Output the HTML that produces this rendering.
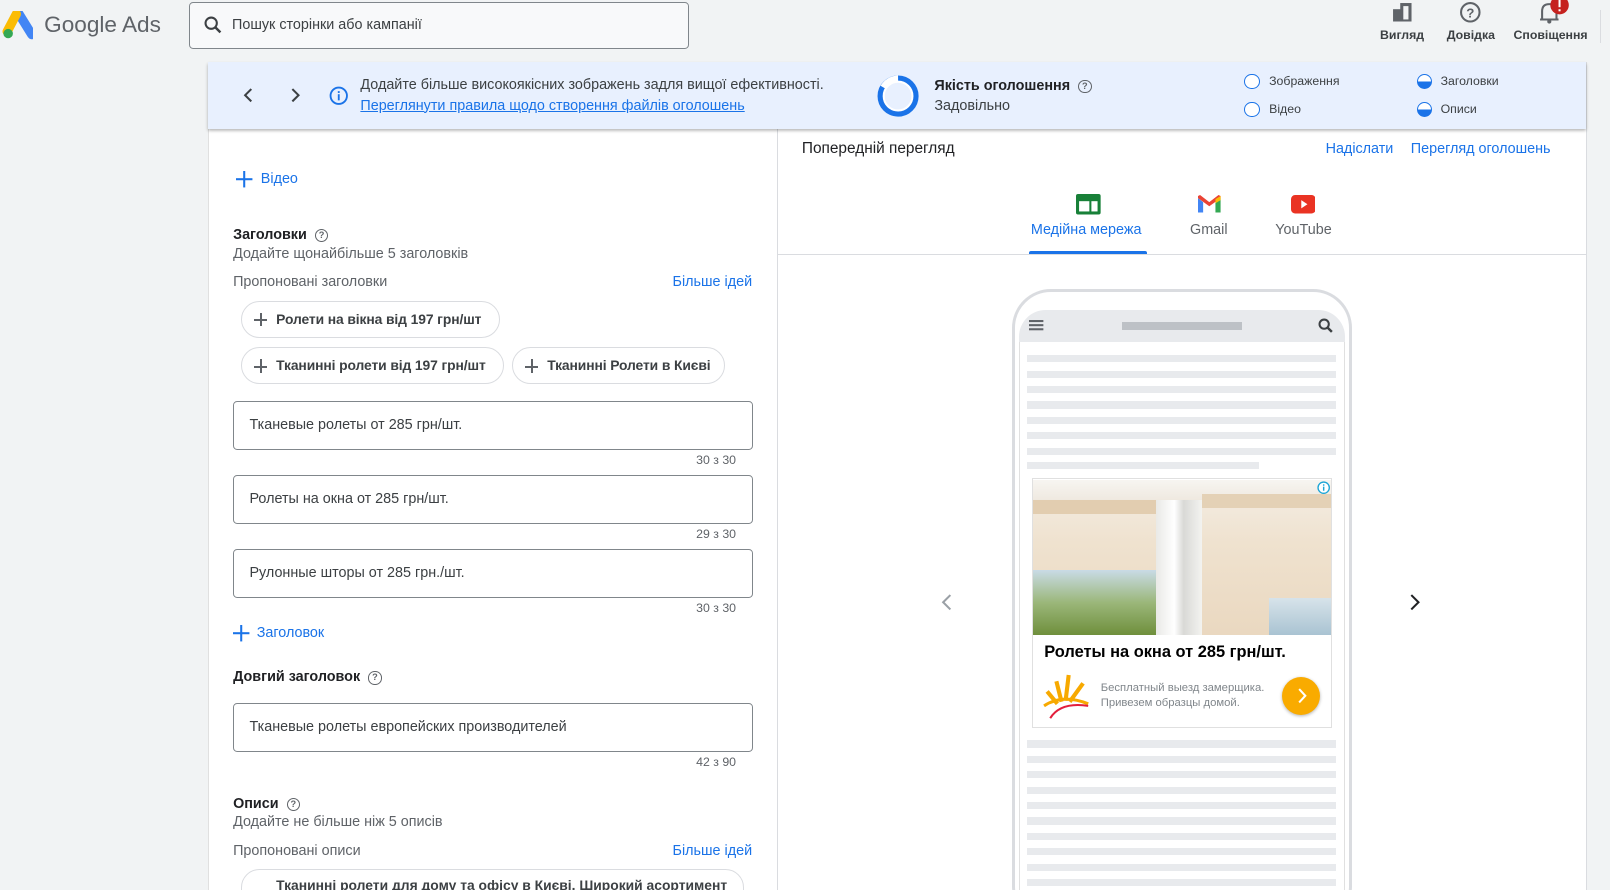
<!DOCTYPE html>
<html><head><meta charset="utf-8">
<style>
*{box-sizing:border-box;margin:0;padding:0}
html,body{width:1610px;height:890px;overflow:hidden;background:#f1f3f4}
#w{zoom:1.02679;width:1568px;height:867px;position:relative;font-family:"Liberation Sans",Arial,sans-serif;color:#3c4043;overflow:hidden}
.a{position:absolute}
.t{font-size:14px;white-space:nowrap}
.blue{color:#1a73e8}
.grey{color:#5f6368}
.chip{position:absolute;height:36px;border:1px solid #dadce0;border-radius:18px;font-size:13.5px;font-weight:bold;color:#3c4043;line-height:34px;padding-left:33px;background:#fff;white-space:nowrap;letter-spacing:-0.1px}
.chip:before{content:"";position:absolute;left:11px;top:17px;width:13px;height:2px;background:#5f6368}
.chip:after{content:"";position:absolute;left:17px;top:11px;width:2px;height:13px;background:#5f6368}
.inp{position:absolute;left:227px;width:506px;height:47px;border:1px solid #80868b;border-radius:4px;font-size:14px;line-height:45px;padding-left:15px;color:#3c4043;background:#fff}
.cnt{position:absolute;left:678px;font-size:12px;color:#5f6368}
.ln{position:absolute;left:1000px;width:301px;height:7px;background:#e8eaed}
.q{display:inline-block;width:13px;height:13px;border:1.5px solid #5f6368;border-radius:50%;font-size:9px;line-height:10px;text-align:center;color:#5f6368;font-weight:bold;vertical-align:1px;margin-left:4px}
.rad{position:absolute;width:15px;height:15px;border:1.5px solid #1a73e8;border-radius:50%;background:#fff}
.half{background:linear-gradient(#fff 50%,#1a73e8 50%)}
</style></head><body><div id="w">
<svg class="a" style="left:2px;top:11px" width="30" height="28" viewBox="0 0 30 28"><path d="M16 2 L29 23" stroke="#4285f4" stroke-width="9" stroke-linecap="round"/><path d="M14 3 L5 20" stroke="#fbbc04" stroke-width="9" stroke-linecap="round"/><circle cx="6" cy="22" r="4.6" fill="#34a853"/></svg>
<div class="a" style="left:43px;top:12px;font-size:22px;color:#5f6368">Google Ads</div>
<div class="a" style="left:184px;top:2px;width:487px;height:46px;border:1px solid #80868b;border-radius:4px;background:#f8f9fa"></div>
<svg class="a" style="left:199px;top:16px" width="18" height="18" viewBox="0 0 18 18"><circle cx="7" cy="7" r="5.5" fill="none" stroke="#3c4043" stroke-width="2"/><path d="M11 11 L16 16" stroke="#3c4043" stroke-width="2.4"/></svg>
<div class="a t" style="left:226px;top:17px;color:#3c4043">Пошук сторінки або кампанії</div>
<svg class="a" style="left:1355px;top:2px" width="22" height="20" viewBox="0 0 22 20"><rect x="9" y="1" width="11" height="18" fill="#5f6368"/><rect x="12" y="4" width="5" height="13" fill="#f1f3f4"/><rect x="2" y="7" width="9" height="12" fill="#5f6368"/></svg>
<svg class="a" style="left:1421px;top:1px" width="22" height="22" viewBox="0 0 22 22"><circle cx="11" cy="11" r="9" fill="none" stroke="#5f6368" stroke-width="2"/><text x="11" y="16" font-size="13" font-weight="bold" text-anchor="middle" fill="#5f6368" font-family="Liberation Sans">?</text></svg>
<svg class="a" style="left:1498px;top:0" width="34" height="24" viewBox="0 0 34 24"><path d="M4 19 L4 11 Q4 4 11 4 Q18 4 18 11 L18 19Z M2 19 L20 19" fill="none" stroke="#5f6368" stroke-width="2"/><circle cx="11" cy="21" r="2" fill="#5f6368"/><circle cx="21" cy="5" r="9" fill="#c5221f"/><rect x="20" y="0" width="2" height="7" fill="#fff"/><rect x="20" y="9" width="2" height="2" fill="#fff"/></svg>
<div class="a" style="left:1344px;top:27px;font-size:12px;font-weight:bold;color:#3c4043">Вигляд</div>
<div class="a" style="left:1409px;top:27px;font-size:12px;font-weight:bold;color:#3c4043">Довідка</div>
<div class="a" style="left:1474px;top:27px;font-size:12px;font-weight:bold;color:#3c4043">Сповіщення</div>
<div class="a" style="left:1558px;top:10px;width:1px;height:32px;background:#dadce0"></div>
<div class="a" style="left:203px;top:60px;width:1342px;height:820px;background:#fff;border-left:1px solid #e0e0e0"></div>
<div class="a" style="left:757px;top:126px;width:1px;height:760px;background:#dadce0"></div>
<div class="a" style="left:1545px;top:60px;width:1px;height:820px;background:#dadce0"></div>
<div class="a" style="left:227px;top:117px;font-size:13px;color:#5f6368;height:9px;overflow:hidden;line-height:4px">описово об'єкту</div>
<div class="a" style="left:203px;top:60px;width:1342px;height:66px;background:#e8f0fe;box-shadow:0 2px 3px rgba(0,0,0,.3)"></div>
<svg class="a" style="left:234px;top:85px" width="64" height="16" viewBox="0 0 64 16"><path d="M11 2 L5 8 L11 14" fill="none" stroke="#3c4043" stroke-width="2"/><path d="M51 2 L57 8 L51 14" fill="none" stroke="#3c4043" stroke-width="2"/></svg>
<svg class="a" style="left:320px;top:84px" width="19" height="19" viewBox="0 0 19 19"><circle cx="9.5" cy="9.5" r="8" fill="none" stroke="#1a73e8" stroke-width="1.8"/><rect x="8.6" y="8" width="1.8" height="6" fill="#1a73e8"/><rect x="8.6" y="5" width="1.8" height="1.8" fill="#1a73e8"/></svg>
<div class="a t" style="left:351px;top:75px;color:#3c4043">Додайте більше високоякісних зображень задля вищої ефективності.</div>
<div class="a t blue" style="left:351px;top:95px;text-decoration:underline">Переглянути правила щодо створення файлів оголошень</div>
<svg class="a" style="left:853px;top:72px" width="43" height="43" viewBox="0 0 43 43"><circle cx="21.5" cy="21.5" r="17" fill="none" stroke="#1a73e8" stroke-width="6"/><circle cx="21.5" cy="21.5" r="14" fill="none" stroke="#fff" stroke-width="2"/><path d="M21.5 4.5 A17 17 0 0 0 7 13" fill="none" stroke="#fff" stroke-width="6"/></svg>
<div class="a t" style="left:910px;top:76px;font-weight:bold;color:#202124">Якість оголошення <span class="q">?</span></div>
<div class="a t" style="left:910px;top:95px">Задовільно</div>
<div class="rad" style="left:1212px;top:72px"></div><div class="a" style="left:1236px;top:72px;font-size:12px">Зображення</div>
<div class="rad" style="left:1212px;top:99px"></div><div class="a" style="left:1236px;top:99px;font-size:12px">Відео</div>
<div class="rad half" style="left:1380px;top:72px"></div><div class="a" style="left:1403px;top:72px;font-size:12px">Заголовки</div>
<div class="rad half" style="left:1380px;top:99px"></div><div class="a" style="left:1403px;top:99px;font-size:12px">Описи</div>
<svg class="a" style="left:230px;top:167px" width="16" height="16"><rect x="7" y="0" width="2" height="16" fill="#1a73e8"/><rect x="0" y="7" width="16" height="2" fill="#1a73e8"/></svg>
<div class="a t blue" style="left:254px;top:167px">Відео</div>
<div class="a t" style="left:227px;top:221px;font-weight:bold;color:#202124">Заголовки <span class="q">?</span></div>
<div class="a t grey" style="left:227px;top:240px">Додайте щонайбільше 5 заголовків</div>
<div class="a t grey" style="left:227px;top:267px">Пропоновані заголовки</div>
<div class="a t blue" style="left:655px;top:267px">Більше ідей</div>
<div class="chip" style="left:235px;top:293px;width:252px">Ролети на вікна від 197 грн/шт</div>
<div class="chip" style="left:235px;top:338px;width:256px">Тканинні ролети від 197 грн/шт</div>
<div class="chip" style="left:499px;top:338px;width:207px">Тканинні Ролети в Києві</div>
<div class="inp" style="top:391px">Тканевые ролеты от 285 грн/шт.</div>
<div class="cnt" style="top:441px">30 з 30</div>
<div class="inp" style="top:463px">Ролеты на окна от 285 грн/шт.</div>
<div class="cnt" style="top:513px">29 з 30</div>
<div class="inp" style="top:535px">Рулонные шторы от 285 грн./шт.</div>
<div class="cnt" style="top:585px">30 з 30</div>
<svg class="a" style="left:227px;top:609px" width="16" height="16"><rect x="7" y="0" width="2" height="16" fill="#1a73e8"/><rect x="0" y="7" width="16" height="2" fill="#1a73e8"/></svg>
<div class="a t blue" style="left:250px;top:609px">Заголовок</div>
<div class="a t" style="left:227px;top:652px;font-weight:bold;color:#202124">Довгий заголовок <span class="q">?</span></div>
<div class="inp" style="top:685px">Тканевые ролеты европейских производителей</div>
<div class="cnt" style="top:735px">42 з 90</div>
<div class="a t" style="left:227px;top:775px;font-weight:bold;color:#202124">Описи <span class="q">?</span></div>
<div class="a t grey" style="left:227px;top:793px">Додайте не більше ніж 5 описів</div>
<div class="a t grey" style="left:227px;top:821px">Пропоновані описи</div>
<div class="a t blue" style="left:655px;top:821px">Більше ідей</div>
<div class="a" style="left:235px;top:846px;width:490px;height:40px;border:1px solid #dadce0;border-radius:18px;font-size:13.5px;font-weight:bold;padding:7px 0 0 33px;white-space:nowrap;overflow:hidden">Тканинні ролети для дому та офісу в Києві. Широкий асортимент</div>
<div class="a" style="left:781px;top:136px;font-size:15px;color:#202124">Попередній перегляд</div>
<div class="a t blue" style="left:1291px;top:137px">Надіслати</div>
<div class="a t blue" style="left:1374px;top:137px">Перегляд оголошень</div>
<svg class="a" style="left:1048px;top:189px" width="24" height="20" viewBox="0 0 24 20"><rect x="0" y="0" width="24" height="20" rx="2" fill="#188038"/><rect x="3" y="7" width="10" height="10" fill="#fff"/><rect x="15" y="7" width="6" height="10" fill="#fff"/></svg>
<svg class="a" style="left:1167px;top:190px" width="22" height="17" viewBox="0 0 22 17"><path d="M0 3 L0 17 L5 17 L5 7Z" fill="#4285f4"/><path d="M22 3 L22 17 L17 17 L17 7Z" fill="#34a853"/><path d="M0 3 L11 11 L22 3 L22 1 L20 0 L11 7 L2 0 L0 1Z" fill="#ea4335"/><path d="M17 4 L22 1 L22 5 L17 8Z" fill="#fbbc04"/></svg>
<svg class="a" style="left:1257px;top:190px" width="24" height="18" viewBox="0 0 24 18"><rect width="24" height="18" rx="4" fill="#ea3323"/><path d="M10 5 L16 9 L10 13Z" fill="#fff"/></svg>
<div class="a t blue" style="left:1004px;top:216px">Медійна мережа</div>
<div class="a t" style="left:1159px;top:216px;color:#5f6368">Gmail</div>
<div class="a t" style="left:1242px;top:216px;color:#5f6368">YouTube</div>
<div class="a" style="left:758px;top:247px;width:787px;height:1px;background:#dadce0"></div>
<div class="a" style="left:1002px;top:244px;width:115px;height:3px;background:#1a73e8;border-radius:2px 2px 0 0"></div>
<svg class="a" style="left:914px;top:578px" width="480" height="20" viewBox="0 0 480 20"><path d="M12 2 L5 9 L12 16" fill="none" stroke="#9aa0a6" stroke-width="2"/><path d="M461 2 L468 9 L461 16" fill="none" stroke="#202124" stroke-width="2"/></svg>
<div class="a" style="left:986px;top:281px;width:331px;height:620px;border:3px solid #dadce0;border-radius:38px;background:#fff"></div>
<div class="a" style="left:992px;top:302px;width:318px;height:31px;background:#e8eaed;border-radius:26px 26px 0 0"></div>
<div class="a" style="left:992px;top:333px;width:1px;height:540px;background:#e0e0e0"></div>
<div class="a" style="left:1309px;top:333px;width:1px;height:540px;background:#e0e0e0"></div>
<svg class="a" style="left:1002px;top:311px" width="16" height="12"><rect y="1" width="14" height="2" fill="#5f6368"/><rect y="5" width="14" height="2" fill="#5f6368"/><rect y="9" width="14" height="2" fill="#5f6368"/></svg>
<div class="a" style="left:1093px;top:314px;width:117px;height:7px;background:#bdc1c6"></div>
<svg class="a" style="left:1284px;top:310px" width="15" height="15"><circle cx="6" cy="6" r="4.5" fill="none" stroke="#3c4043" stroke-width="2"/><path d="M9 9 L13.5 13.5" stroke="#3c4043" stroke-width="2.4"/></svg>
<div class="ln" style="top:346px"></div><div class="ln" style="top:361px"></div><div class="ln" style="top:376px"></div><div class="ln" style="top:391px"></div><div class="ln" style="top:406px"></div><div class="ln" style="top:421px"></div><div class="ln" style="top:436px"></div><div class="ln" style="top:450px;width:226px"></div>
<div class="a" style="left:1005px;top:466px;width:292px;height:243px;border:1px solid #e0e0e0;background:#fff"></div>
<div class="a" style="left:1006px;top:467px;width:290px;height:151px;overflow:hidden;background:linear-gradient(180deg,#f4eee6 0%,#efe2cf 40%,#ead8c0 100%)">
  <div class="a" style="left:0;top:0;width:290px;height:20px;background:linear-gradient(180deg,#f7f5f1,#efe9e0)"></div>
  <div class="a" style="left:0;top:20px;width:125px;height:14px;background:#e2cdb0"></div>
  <div class="a" style="left:0;top:88px;width:125px;height:63px;background:linear-gradient(180deg,#c9dbe6,#9bb77a 50%,#6f8f3c)"></div>
  <div class="a" style="left:120px;top:20px;width:45px;height:131px;background:linear-gradient(90deg,#e9e9e6,#fff 40%,#d9d9d6 60%,#f3f3f0)"></div>
  <div class="a" style="left:165px;top:14px;width:125px;height:14px;background:#e4d1b6"></div>
  <div class="a" style="left:230px;top:115px;width:60px;height:36px;background:linear-gradient(180deg,#d7e3ea,#a9c3d2)"></div>
</div>
<svg class="a" style="left:1283px;top:468px" width="13" height="13"><circle cx="6.5" cy="6.5" r="5.5" fill="#fff" stroke="#1ca5d6" stroke-width="1.3"/><rect x="5.8" y="5.5" width="1.4" height="4" fill="#1ca5d6"/><rect x="5.8" y="3.2" width="1.4" height="1.4" fill="#1ca5d6"/></svg>
<div class="a" style="left:1017px;top:626px;font-size:16px;font-weight:bold;color:#000;white-space:nowrap">Ролеты на окна от 285 грн/шт.</div>
<svg class="a" style="left:1015px;top:655px" width="46" height="46" viewBox="0 0 46 46"><g stroke="#f7a900" stroke-width="4"><path d="M5 18 L15 30"/><path d="M14 8 L19 28"/><path d="M26 2 L23 27"/><path d="M40 10 L27 28"/></g><path d="M2 32 Q20 20 45 30" stroke="#f7a900" stroke-width="3" fill="none"/><path d="M8 44 Q18 28 45 32" stroke="#e31e3c" stroke-width="2" fill="none"/></svg>
<div class="a" style="left:1072px;top:663px;font-size:11px;color:#80868b;line-height:15px;white-space:nowrap">Бесплатный выезд замерщика.<br>Привезем образцы домой.</div>
<div class="a" style="left:1249px;top:659px;width:37px;height:37px;border-radius:50%;background:#f9ab00;box-shadow:0 1px 3px rgba(0,0,0,.3)"></div>
<svg class="a" style="left:1259px;top:668px" width="18" height="19"><path d="M6 3 L12 9.5 L6 16" fill="none" stroke="#fff" stroke-width="2"/></svg>
<div class="ln" style="top:721px"></div><div class="ln" style="top:736px"></div><div class="ln" style="top:751px"></div><div class="ln" style="top:766px"></div><div class="ln" style="top:781px"></div><div class="ln" style="top:796px"></div><div class="ln" style="top:811px"></div><div class="ln" style="top:826px"></div><div class="ln" style="top:841px"></div><div class="ln" style="top:856px"></div>
</div></body></html>
